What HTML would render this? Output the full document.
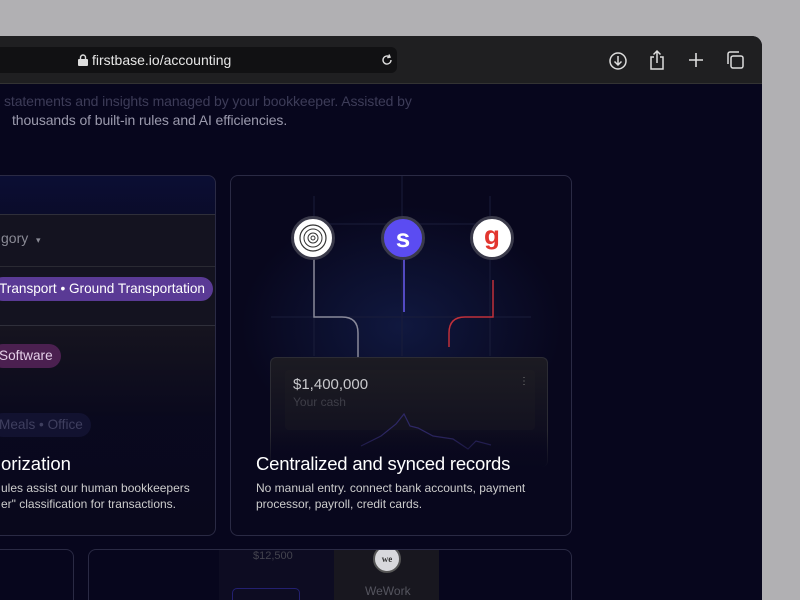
<!DOCTYPE html>
<html><head><meta charset="utf-8"><style>
*{margin:0;padding:0;box-sizing:border-box}
body{width:800px;height:600px;overflow:hidden;background:#b1b0b3;font-family:"Liberation Sans",sans-serif;position:relative}
.win{position:absolute;left:0;top:36px;width:762px;height:564px;background:#07061d;border-top-right-radius:10px;overflow:hidden}
.bar{position:absolute;left:0;top:0;width:762px;height:48px;background:#1f1f21;border-bottom:1px solid #333}
.addr{position:absolute;left:0;top:11px;width:397px;height:26px;background:#111113;border-radius:0 6px 6px 0;color:#e6e6e6;font-size:14px;line-height:26px}
.t{position:absolute;white-space:nowrap}
.card{position:absolute;border:1px solid #2a2a44;border-radius:8px;overflow:hidden}
.pill{position:absolute;border-radius:12px;white-space:nowrap;font-size:13.6px;line-height:24px;padding:0 8px}
.c{position:absolute;border-radius:50%;width:44px;height:44px;border:3px solid #3a3a4a;display:flex;align-items:center;justify-content:center}
</style></head><body>
<div class="win">
 <div class="bar">
  <div class="addr"><svg class="t" style="left:78px;top:7px" width="10" height="12" viewBox="0 0 10 12"><rect x="0" y="5" width="10" height="7" rx="1" fill="#ddd"/><path d="M2.5 5V3.5a2.5 2.5 0 0 1 5 0V5" fill="none" stroke="#ddd" stroke-width="1.4"/></svg><span class="t" style="left:92px;top:0">firstbase.io/accounting</span>
   <svg class="t" style="left:380px;top:6px" width="14" height="14" viewBox="0 0 14 14"><path d="M11 7a4 4 0 1 1-1.5-3.1" fill="none" stroke="#ddd" stroke-width="1.4"/><path d="M9 1.5l1 2.6-2.7.6" fill="none" stroke="#ddd" stroke-width="1.4"/></svg></div>
  <svg class="t" style="left:608px;top:15px" width="20" height="20" viewBox="0 0 20 20"><circle cx="10" cy="10" r="8" fill="none" stroke="#ddd" stroke-width="1.5"/><path d="M10 5v9M6.5 10.5L10 14l3.5-3.5" fill="none" stroke="#ddd" stroke-width="1.5"/></svg>
  <svg class="t" style="left:647px;top:13px" width="20" height="22" viewBox="0 0 20 22"><path d="M7 8H4v12h12V8h-3M10 2v12M6.5 5.5L10 2l3.5 3.5" fill="none" stroke="#ddd" stroke-width="1.5"/></svg>
  <svg class="t" style="left:687px;top:15px" width="18" height="18" viewBox="0 0 18 18"><path d="M9 2v14M2 9h14" stroke="#ddd" stroke-width="1.6"/></svg>
  <svg class="t" style="left:725px;top:14px" width="20" height="20" viewBox="0 0 20 20"><rect x="6" y="6" width="12" height="12" rx="2" fill="none" stroke="#ddd" stroke-width="1.5"/><path d="M3 14V4a2 2 0 0 1 2-2h9" fill="none" stroke="#ddd" stroke-width="1.5"/></svg>
 </div>
 <div class="t" style="left:4px;top:57px;color:#3d3c58;font-size:14px;letter-spacing:-0.1px">statements and insights managed by your bookkeeper. Assisted by</div>
 <div class="t" style="left:12px;top:76px;color:#9b9aad;font-size:14px;letter-spacing:-0.1px">thousands of built-in rules and AI efficiencies.</div>

 <div class="card" style="left:-10px;top:139px;width:226px;height:361px;background:linear-gradient(#0b0e34,#0a0a22 20%,#09081c)">
  <div style="position:absolute;left:0;top:38px;width:226px;height:112px;background:#141320;border-top:1px solid #2f2f3a;border-bottom:1px solid #2f2f3a"></div>
  <div style="position:absolute;left:0;top:90px;width:226px;height:1px;background:#2a2a33"></div>
  <div class="t" style="left:10px;top:54px;color:#8a8a95;font-size:14px">gory &nbsp;<span style="font-size:9px">&#9662;</span></div>
  <div class="pill" style="left:0;top:101px;background:#5a3a95;color:#fff">Transport • Ground Transportation</div>
  <div style="position:absolute;left:0;top:150px;width:226px;height:90px;background:linear-gradient(#16141f,#0a091d)"></div>
  <div class="pill" style="left:0;top:168px;background:#4b2050;color:#e4cfe8">Software</div>
  <div class="pill" style="left:0;top:237px;background:#121230;color:#3f3f5f">Meals • Office</div>
  <div class="t" style="left:10px;top:277px;color:#fff;font-size:18.5px">orization</div>
  <div class="t" style="left:10px;top:304px;color:#ccc;font-size:12px;line-height:16px">ules assist our human bookkeepers<br>er" classification for transactions.</div>
 </div>

 <div class="card" style="left:230px;top:139px;width:342px;height:361px;background:radial-gradient(ellipse 160px 120px at 170px 150px,#10183f,#08071d)">
  <svg class="t" style="left:0;top:0" width="342" height="200" viewBox="0 0 342 200">
   <g stroke="#1a1d3a" stroke-width="1" fill="none"><path d="M83 20v160M171 0v180M259 20v160M40 141h260M83 48h176"/></g>
   <path d="M83 80v61h28q16 0 16 16v24" fill="none" stroke="#8a8a9a" stroke-width="1.5"/>
   <path d="M173 80v56" stroke="#6a5cf0" stroke-width="1.5"/>
   <path d="M262 104v37h-28q-16 0-16 16v14" fill="none" stroke="#c0303a" stroke-width="1.5"/>
  </svg>
  <div class="c" style="left:60px;top:40px;background:#fff"><svg width="30" height="30" viewBox="0 0 30 30"><circle cx="15" cy="15" r="13" fill="none" stroke="#333" stroke-width="1.2"/><circle cx="15" cy="15" r="9" fill="none" stroke="#333" stroke-width="1"/><circle cx="15" cy="15" r="5" fill="none" stroke="#333"/><circle cx="15" cy="15" r="2" fill="none" stroke="#333"/></svg></div>
  <div class="c" style="left:150px;top:40px;background:#5b4cf2;color:#fff;font-weight:bold;font-size:26px;line-height:1">s</div>
  <div class="c" style="left:239px;top:40px;background:#fff;color:#e2362f;font-weight:bold;font-size:26px;line-height:1;padding-bottom:6px">g</div>
  <div style="position:absolute;left:39px;top:181px;width:278px;height:110px;background:linear-gradient(#1c1b22,#0b0a1e 85%);border:1px solid #2c2c34;border-bottom:none;border-radius:6px"></div>
  <div style="position:absolute;left:54px;top:194px;width:250px;height:60px;background:linear-gradient(#1c1b22,#131220);border-radius:4px"></div>
  <div class="t" style="left:62px;top:200px;color:#c8c8cc;font-size:15px">$1,400,000</div>
  <div class="t" style="left:62px;top:219px;color:#3e3e48;font-size:12px">Your cash</div>
  <div class="t" style="left:288px;top:200px;color:#777;font-size:10px">&#8942;</div>
  <svg class="t" style="left:100px;top:230px" width="240" height="50"><path d="M30 40l20-10 15-12 8-10 6 12 8 2 15 8 20 3 15 10 8-8 15 4" fill="none" stroke="#2e2866" stroke-width="1.2"/></svg>
  <div style="position:absolute;left:0;top:255px;width:342px;height:40px;background:linear-gradient(rgba(8,7,29,0),#08071d)"></div>
  <div class="t" style="left:25px;top:277px;color:#fff;font-size:18.5px;letter-spacing:-0.2px">Centralized and synced records</div>
  <div class="t" style="left:25px;top:304px;color:#ccc;font-size:12px;line-height:16px">No manual entry. connect bank accounts, payment<br>processor, payroll, credit cards.</div>
 </div>

 <div class="card" style="left:-10px;top:513px;width:84px;height:80px"></div>
 <div class="card" style="left:88px;top:513px;width:484px;height:80px">
  <div style="position:absolute;left:130px;top:0;width:115px;height:60px;background:#0d0c22"></div>
  <div style="position:absolute;left:245px;top:0;width:105px;height:60px;background:#18171f"></div>
  <div class="t" style="left:164px;top:0;color:#44444f;font-size:11px">$12,500</div>
  <div style="position:absolute;left:284px;top:-5px;width:28px;height:28px;border-radius:50%;background:#d8d8dc;border:2px solid #555;font:bold 9px 'Liberation Serif',serif;color:#333;text-align:center;line-height:24px">we</div>
  <div class="t" style="left:276px;top:34px;color:#55555f;font-size:12px">WeWork</div>
  <div style="position:absolute;left:143px;top:38px;width:68px;height:30px;border:1px solid #232070;border-radius:5px"></div>
 </div>
</div>
</body></html>
